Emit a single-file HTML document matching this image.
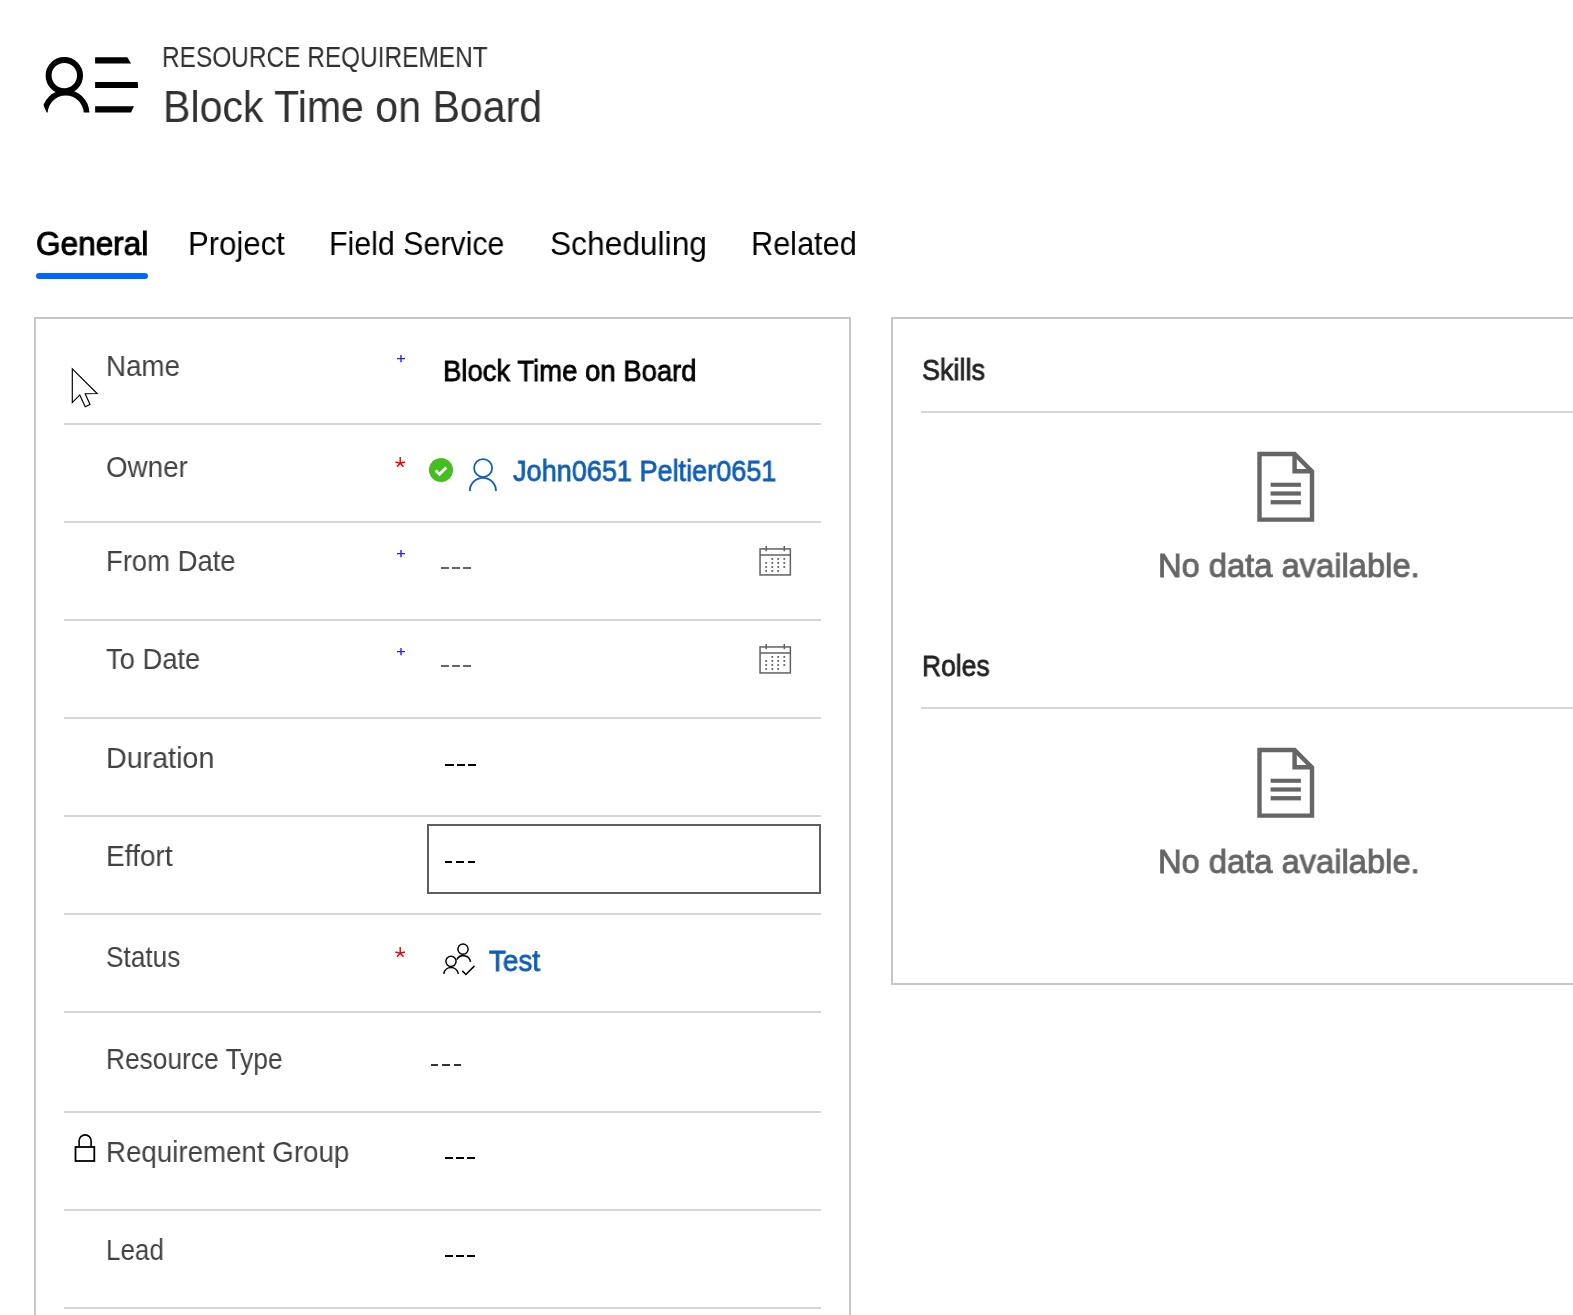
<!DOCTYPE html>
<html lang="en"><head><meta charset="utf-8"><title>Resource Requirement - Block Time on Board</title>
<style>
html,body{margin:0;padding:0;background:#fff;}
body{width:1573px;height:1315px;overflow:hidden;position:relative;font-family:"Liberation Sans",sans-serif;}
.tx{position:absolute;white-space:nowrap;line-height:normal;transform-origin:0 0;will-change:transform;-webkit-font-smoothing:antialiased;}
svg{overflow:visible}
</style></head><body>
<svg class="hdr-icon" width="110" height="70" viewBox="35 50 110 70" style="position:absolute;left:35px;top:50px">
<defs><clipPath id="bodyclip"><polygon points="35,50 145,50 145,112.5 46.7,112.5 42.4,102.9 35,100"/></clipPath></defs>
<circle cx="64.3" cy="75.6" r="15.7" fill="none" stroke="#000" stroke-width="6"/>
<path d="M44.8 113.5 A20.9 20.9 0 0 1 86.6 113.5" fill="none" stroke="#000" stroke-width="5.8" clip-path="url(#bodyclip)"/>
<polygon points="95.1,57.2 127.3,57.2 131.1,63.4 95.1,63.4" fill="#000"/>
<polygon points="95.1,82 137.8,82 138,87.9 95.1,87.9" fill="#000"/>
<polygon points="95.1,106.3 134,106.3 131,112.5 95.1,112.5" fill="#000"/>
</svg>
<div style="position:absolute;left:36px;top:273px;width:112px;height:6px;background:#0064ff;border-radius:3px"></div>
<div class="section" style="position:absolute;left:34px;top:317px;width:813px;height:1100px;border:2px solid #c8c6c4"></div>
<div style="position:absolute;left:64px;top:423px;width:757px;height:2px;background:#d6d6d6;"></div>
<div style="position:absolute;left:64px;top:521px;width:757px;height:2px;background:#d6d6d6;"></div>
<div style="position:absolute;left:64px;top:619px;width:757px;height:2px;background:#d6d6d6;"></div>
<div style="position:absolute;left:64px;top:717px;width:757px;height:2px;background:#d6d6d6;"></div>
<div style="position:absolute;left:64px;top:815px;width:757px;height:2px;background:#d6d6d6;"></div>
<div style="position:absolute;left:64px;top:913px;width:757px;height:2px;background:#d6d6d6;"></div>
<div style="position:absolute;left:64px;top:1011px;width:757px;height:2px;background:#d6d6d6;"></div>
<div style="position:absolute;left:64px;top:1111px;width:757px;height:2px;background:#d6d6d6;"></div>
<div style="position:absolute;left:64px;top:1209px;width:757px;height:2px;background:#d6d6d6;"></div>
<div style="position:absolute;left:64px;top:1307px;width:757px;height:2px;background:#d6d6d6;"></div>
<div class="section" style="position:absolute;left:891px;top:317px;width:800px;height:664px;border:2px solid #c8c6c4"></div>
<div style="position:absolute;left:921px;top:411px;width:700px;height:2px;background:#d6d6d6;"></div>
<div style="position:absolute;left:921px;top:707px;width:700px;height:2px;background:#d6d6d6;"></div>
<svg width="40" height="50" viewBox="65 362 40 50" style="position:absolute;left:65px;top:362px">
<polygon points="72.3,368.9 72.3,402.6 79.8,394.9 85.2,406.8 90,404.5 85.2,393.8 97.1,393.5" fill="#fff" stroke="#000" stroke-width="1.15" stroke-linejoin="miter"/>
</svg>
<svg width="12" height="12" style="position:absolute;left:395px;top:353px" viewBox="395 353 12 12"><path d="M397 358.6 H405 M401 355 V362.2" stroke="#2020ff" stroke-width="1.4" fill="none"/></svg>
<svg width="12" height="12" style="position:absolute;left:395px;top:548px" viewBox="395 548 12 12"><path d="M397 553.6 H405 M401 550 V557.2" stroke="#2020ff" stroke-width="1.4" fill="none"/></svg>
<svg width="12" height="12" style="position:absolute;left:395px;top:646px" viewBox="395 646 12 12"><path d="M397 651.6 H405 M401 648 V655.2" stroke="#2020ff" stroke-width="1.4" fill="none"/></svg>
<svg width="14" height="14" viewBox="393 453.8 14 14" style="position:absolute;left:393px;top:453.8px"><g stroke="#e00000" stroke-width="1.4" fill="none" stroke-linecap="butt"><path d="M400.2 456.8 V463.1"/><path d="M395.5 461.8 L400.2 463.1 L405 461.8"/><path d="M397 466.5 L400.2 463.1 L403.5 466.5"/></g></svg>
<svg width="14" height="14" viewBox="393 943.8 14 14" style="position:absolute;left:393px;top:943.8px"><g stroke="#e00000" stroke-width="1.4" fill="none" stroke-linecap="butt"><path d="M400.2 946.8 V953.0999999999999"/><path d="M395.5 951.8 L400.2 953.0999999999999 L405 951.8"/><path d="M397 956.5 L400.2 953.0999999999999 L403.5 956.5"/></g></svg>
<svg width="80" height="40" viewBox="425 452 80 40" style="position:absolute;left:425px;top:452px">
<circle cx="441" cy="470" r="12" fill="#45be1f"/>
<path d="M435.7 470.6 L439.5 474.2 L446.3 467.4" fill="none" stroke="#fff" stroke-width="2.8" stroke-linecap="butt"/>
<circle cx="483.1" cy="468.1" r="9" fill="none" stroke="#115fb5" stroke-width="1.8"/>
<path d="M469.8 490.9 A13.1 13.1 0 0 1 496 490.9" fill="none" stroke="#115fb5" stroke-width="1.8"/>
</svg>
<div style="position:absolute;left:440.9px;top:566.8px;width:7.7px;height:2.1px;background:#666;"></div><div style="position:absolute;left:452.3px;top:566.8px;width:7.7px;height:2.1px;background:#666;"></div><div style="position:absolute;left:463.4px;top:566.8px;width:7.5px;height:2.1px;background:#666;"></div>
<div style="position:absolute;left:440.9px;top:664.8px;width:7.7px;height:2.1px;background:#666;"></div><div style="position:absolute;left:452.3px;top:664.8px;width:7.7px;height:2.1px;background:#666;"></div><div style="position:absolute;left:463.4px;top:664.8px;width:7.5px;height:2.1px;background:#666;"></div>
<div style="position:absolute;left:445.3px;top:763.8px;width:8.3px;height:2.6px;background:#000;"></div><div style="position:absolute;left:456.5px;top:763.8px;width:8.3px;height:2.6px;background:#000;"></div><div style="position:absolute;left:468px;top:763.8px;width:8.2px;height:2.6px;background:#000;"></div>
<div style="position:absolute;left:445px;top:860.9px;width:7.3px;height:2.1px;background:#000;"></div><div style="position:absolute;left:456.4px;top:860.9px;width:7.4px;height:2.1px;background:#000;"></div><div style="position:absolute;left:467.5px;top:860.9px;width:7.5px;height:2.1px;background:#000;"></div>
<div style="position:absolute;left:431.1px;top:1063.9px;width:7.1px;height:2.0px;background:#333;"></div><div style="position:absolute;left:442.3px;top:1063.9px;width:7.4px;height:2.0px;background:#333;"></div><div style="position:absolute;left:453.6px;top:1063.9px;width:7.5px;height:2.0px;background:#333;"></div>
<div style="position:absolute;left:444.7px;top:1156.8px;width:8.2px;height:2.6px;background:#000;"></div><div style="position:absolute;left:455.9px;top:1156.8px;width:8.2px;height:2.6px;background:#000;"></div><div style="position:absolute;left:467.1px;top:1156.8px;width:8.2px;height:2.6px;background:#000;"></div>
<div style="position:absolute;left:444.7px;top:1254.8px;width:8.2px;height:2.6px;background:#000;"></div><div style="position:absolute;left:455.9px;top:1254.8px;width:8.2px;height:2.6px;background:#000;"></div><div style="position:absolute;left:467.1px;top:1254.8px;width:8.2px;height:2.6px;background:#000;"></div>
<svg width="40" height="36" viewBox="755 542.0 40 36" style="position:absolute;left:755px;top:542.0px">
<rect x="760.05" y="548.95" width="30.3" height="26.0" fill="none" stroke="#616161" stroke-width="1.5"/>
<path d="M760 555.05 H790.4 M766.2 546.1 V551.2 M784.3 546.1 V551.2" stroke="#616161" stroke-width="1.5" fill="none"/>
<rect x="771.4" y="558.0" width="1.8" height="1.8" fill="#616161"/><rect x="777.3000000000001" y="558.0" width="1.8" height="1.8" fill="#616161"/><rect x="783.4" y="558.0" width="1.8" height="1.8" fill="#616161"/><rect x="765.3000000000001" y="562.0" width="1.8" height="1.8" fill="#616161"/><rect x="771.4" y="562.0" width="1.8" height="1.8" fill="#616161"/><rect x="777.3000000000001" y="562.0" width="1.8" height="1.8" fill="#616161"/><rect x="783.4" y="562.0" width="1.8" height="1.8" fill="#616161"/><rect x="765.3000000000001" y="566.1" width="1.8" height="1.8" fill="#616161"/><rect x="771.4" y="566.1" width="1.8" height="1.8" fill="#616161"/><rect x="777.3000000000001" y="566.1" width="1.8" height="1.8" fill="#616161"/><rect x="783.4" y="566.1" width="1.8" height="1.8" fill="#616161"/><rect x="765.3000000000001" y="570.1" width="1.8" height="1.8" fill="#616161"/><rect x="771.4" y="570.1" width="1.8" height="1.8" fill="#616161"/><rect x="777.3000000000001" y="570.1" width="1.8" height="1.8" fill="#616161"/></svg>
<svg width="40" height="36" viewBox="755 640.0 40 36" style="position:absolute;left:755px;top:640.0px">
<rect x="760.05" y="646.95" width="30.3" height="26.0" fill="none" stroke="#616161" stroke-width="1.5"/>
<path d="M760 653.05 H790.4 M766.2 644.1 V649.2 M784.3 644.1 V649.2" stroke="#616161" stroke-width="1.5" fill="none"/>
<rect x="771.4" y="656.0" width="1.8" height="1.8" fill="#616161"/><rect x="777.3000000000001" y="656.0" width="1.8" height="1.8" fill="#616161"/><rect x="783.4" y="656.0" width="1.8" height="1.8" fill="#616161"/><rect x="765.3000000000001" y="660.0" width="1.8" height="1.8" fill="#616161"/><rect x="771.4" y="660.0" width="1.8" height="1.8" fill="#616161"/><rect x="777.3000000000001" y="660.0" width="1.8" height="1.8" fill="#616161"/><rect x="783.4" y="660.0" width="1.8" height="1.8" fill="#616161"/><rect x="765.3000000000001" y="664.1" width="1.8" height="1.8" fill="#616161"/><rect x="771.4" y="664.1" width="1.8" height="1.8" fill="#616161"/><rect x="777.3000000000001" y="664.1" width="1.8" height="1.8" fill="#616161"/><rect x="783.4" y="664.1" width="1.8" height="1.8" fill="#616161"/><rect x="765.3000000000001" y="668.1" width="1.8" height="1.8" fill="#616161"/><rect x="771.4" y="668.1" width="1.8" height="1.8" fill="#616161"/><rect x="777.3000000000001" y="668.1" width="1.8" height="1.8" fill="#616161"/></svg>
<div class="input" style="position:absolute;left:427px;top:824px;width:390px;height:66px;border:2px solid #5e5e5e"></div>
<svg width="40" height="40" viewBox="440 940 40 40" style="position:absolute;left:440px;top:940px">
<g fill="none" stroke="#000" stroke-width="1.5">
<circle cx="451" cy="961.3" r="5.1"/>
<path d="M443.7 973.8 A7.4 7.4 0 0 1 458.3 973.8"/>
<circle cx="463" cy="949.2" r="5.1"/>
<path d="M456.8 959.6 A7.3 7.3 0 0 1 470.5 961.9"/>
<path d="M462.3 970.9 L465.9 974.5 L474.5 965.9"/>
</g></svg>
<svg width="30" height="34" viewBox="70 1130 30 34" style="position:absolute;left:70px;top:1130px">
<rect x="75.5" y="1147" width="18.8" height="14" fill="none" stroke="#000" stroke-width="1.8"/>
<path d="M79.1 1146.5 V1140.9 A6 6 0 0 1 91.1 1140.9 V1146.5" fill="none" stroke="#000" stroke-width="1.6"/>
</svg>
<svg width="64" height="76" viewBox="1254 448.0 64 76" style="position:absolute;left:1254px;top:448.0px">
<path d="M1259.5 454.0 H1294.6 L1312 471.5 V519.6 H1259.5 Z" fill="none" stroke="#666" stroke-width="4.4" stroke-linejoin="miter"/>
<path d="M1294.6 454.0 V471.3 H1312" fill="none" stroke="#666" stroke-width="4.4"/>
<rect x="1270.6" y="482.7" width="30.3" height="4.1" fill="#666"/>
<rect x="1270.6" y="491.4" width="30.3" height="4.2" fill="#666"/>
<rect x="1270.6" y="500.1" width="30.3" height="4.3" fill="#666"/>
</svg>
<svg width="64" height="76" viewBox="1254 744.0 64 76" style="position:absolute;left:1254px;top:744.0px">
<path d="M1259.5 750.0 H1294.6 L1312 767.5 V815.5999999999999 H1259.5 Z" fill="none" stroke="#666" stroke-width="4.4" stroke-linejoin="miter"/>
<path d="M1294.6 750.0 V767.3 H1312" fill="none" stroke="#666" stroke-width="4.4"/>
<rect x="1270.6" y="778.6999999999999" width="30.3" height="4.1" fill="#666"/>
<rect x="1270.6" y="787.3999999999999" width="30.3" height="4.2" fill="#666"/>
<rect x="1270.6" y="796.0999999999999" width="30.3" height="4.3" fill="#666"/>
</svg>
<div class="tx" style="left:162.19px;top:40.00px;font-size:29.5px;font-weight:400;color:#323130;transform:scaleX(0.8280);">RESOURCE REQUIREMENT</div>
<div class="tx" style="left:162.69px;top:81.80px;font-size:43.75px;font-weight:400;color:#323130;transform:scaleX(0.9391);">Block Time on Board</div>
<div class="tx" style="left:35.62px;top:224.60px;font-size:32.75px;font-weight:400;color:#000000;transform:scaleX(0.9635);-webkit-text-stroke:1.0px #000000;">General</div>
<div class="tx" style="left:188.07px;top:224.60px;font-size:32.75px;font-weight:400;color:#000000;transform:scaleX(0.9499);">Project</div>
<div class="tx" style="left:329.43px;top:224.60px;font-size:32.75px;font-weight:400;color:#000000;transform:scaleX(0.9266);">Field Service</div>
<div class="tx" style="left:550.21px;top:224.60px;font-size:32.75px;font-weight:400;color:#000000;transform:scaleX(0.9686);">Scheduling</div>
<div class="tx" style="left:750.50px;top:224.60px;font-size:32.75px;font-weight:400;color:#000000;transform:scaleX(0.9365);">Related</div>
<div class="tx" style="left:106.03px;top:349.90px;font-size:29.0px;font-weight:400;color:#424242;transform:scaleX(0.9565);">Name</div>
<div class="tx" style="left:105.70px;top:451.00px;font-size:29.0px;font-weight:400;color:#424242;transform:scaleX(0.9569);">Owner</div>
<div class="tx" style="left:106.06px;top:544.90px;font-size:29.0px;font-weight:400;color:#424242;transform:scaleX(0.9459);">From Date</div>
<div class="tx" style="left:105.97px;top:642.90px;font-size:29.0px;font-weight:400;color:#424242;transform:scaleX(0.9429);">To Date</div>
<div class="tx" style="left:105.96px;top:741.70px;font-size:29.0px;font-weight:400;color:#424242;transform:scaleX(0.9885);">Duration</div>
<div class="tx" style="left:106.21px;top:839.70px;font-size:29.0px;font-weight:400;color:#424242;transform:scaleX(0.9683);">Effort</div>
<div class="tx" style="left:106.48px;top:940.80px;font-size:29.0px;font-weight:400;color:#424242;transform:scaleX(0.9042);">Status</div>
<div class="tx" style="left:106.34px;top:1043.00px;font-size:29.0px;font-weight:400;color:#424242;transform:scaleX(0.9076);">Resource Type</div>
<div class="tx" style="left:106.24px;top:1136.00px;font-size:29.0px;font-weight:400;color:#424242;transform:scaleX(0.9552);">Requirement Group</div>
<div class="tx" style="left:106.17px;top:1234.00px;font-size:29.0px;font-weight:400;color:#424242;transform:scaleX(0.8957);">Lead</div>
<div class="tx" style="left:442.95px;top:353.50px;font-size:30.0px;font-weight:400;color:#000000;transform:scaleX(0.9162);-webkit-text-stroke:0.8px #000000;">Block Time on Board</div>
<div class="tx" style="left:513.18px;top:454.90px;font-size:29.0px;font-weight:400;color:#115fb5;transform:scaleX(0.9336);-webkit-text-stroke:0.8px #115fb5;">John0651 Peltier0651</div>
<div class="tx" style="left:489.47px;top:945.00px;font-size:29.0px;font-weight:400;color:#115fb5;transform:scaleX(0.9578);-webkit-text-stroke:0.8px #115fb5;">Test</div>
<div class="tx" style="left:921.96px;top:353.80px;font-size:29.0px;font-weight:400;color:#242424;transform:scaleX(0.9308);-webkit-text-stroke:0.8px #242424;">Skills</div>
<div class="tx" style="left:921.83px;top:649.90px;font-size:29.0px;font-weight:400;color:#242424;transform:scaleX(0.9116);-webkit-text-stroke:0.8px #242424;">Roles</div>
<div class="tx" style="left:1157.50px;top:546.60px;font-size:33.0px;font-weight:400;color:#666666;transform:scaleX(0.9903);-webkit-text-stroke:0.9px #666666;">No data available.</div>
<div class="tx" style="left:1157.50px;top:842.60px;font-size:33.0px;font-weight:400;color:#666666;transform:scaleX(0.9903);-webkit-text-stroke:0.9px #666666;">No data available.</div>
</body></html>
